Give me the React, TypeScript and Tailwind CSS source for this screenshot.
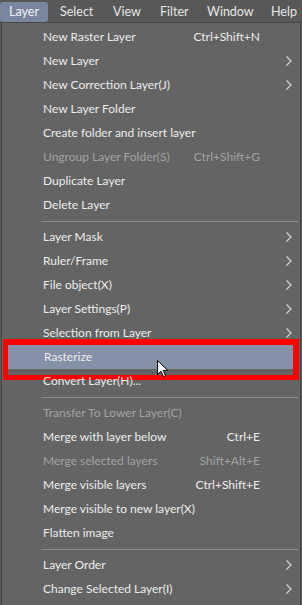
import React from 'react'

type Item = {
  label: string
  shortcut?: string
  sub?: boolean
  disabled?: boolean
  active?: boolean
}

const groups: Item[][] = [
  [
    { label: 'New Raster Layer', shortcut: 'Ctrl+Shift+N' },
    { label: 'New Layer', sub: true },
    { label: 'New Correction Layer(J)', sub: true },
    { label: 'New Layer Folder' },
    { label: 'Create folder and insert layer' },
    { label: 'Ungroup Layer Folder(S)', shortcut: 'Ctrl+Shift+G', disabled: true },
    { label: 'Duplicate Layer' },
    { label: 'Delete Layer' },
  ],
  [
    { label: 'Layer Mask', sub: true },
    { label: 'Ruler/Frame', sub: true },
    { label: 'File object(X)', sub: true },
    { label: 'Layer Settings(P)', sub: true },
    { label: 'Selection from Layer', sub: true },
    { label: 'Rasterize', active: true },
    { label: 'Convert Layer(H)...' },
  ],
  [
    { label: 'Transfer To Lower Layer(C)', disabled: true },
    { label: 'Merge with layer below', shortcut: 'Ctrl+E' },
    { label: 'Merge selected layers', shortcut: 'Shift+Alt+E', disabled: true },
    { label: 'Merge visible layers', shortcut: 'Ctrl+Shift+E' },
    { label: 'Merge visible to new layer(X)' },
    { label: 'Flatten image' },
  ],
  [
    { label: 'Layer Order', sub: true },
    { label: 'Change Selected Layer(I)', sub: true },
  ],
]

const menus = [
  { name: 'Layer', w: 'w-[48px] justify-center' },
  { name: 'Select', w: 'w-[55px] pl-[12px]' },
  { name: 'View', w: 'w-[47px] pl-[10px]' },
  { name: 'Filter', w: 'w-[47px] pl-[10px]' },
  { name: 'Window', w: 'w-[64px] pl-[10px]' },
  { name: 'Help', w: 'w-[41px] pl-[10px]' },
]

function Chevron() {
  return (
    <svg width="6" height="10" viewBox="0 0 6 10" className="block">
      <path d="M0.5 0.5 L5 5 L0.5 9.5" fill="none" stroke="#d8d8d8" strokeWidth="1.1" />
    </svg>
  )
}

function Cursor() {
  return (
    <svg width="12" height="18" viewBox="0 0 12 18" className="absolute left-[154px] top-[15px]">
      <path d="M0.5 0.5 L0.5 14.5 L4 11.2 L6.5 16.8 L8.6 15.9 L6.2 10.4 L10.8 10.4 Z" fill="#fff" stroke="#000" strokeWidth="1" />
    </svg>
  )
}

function Row({ item }: { item: Item }) {
  const color = item.disabled ? 'text-[#a2a2a2]' : 'text-[#ececec]'
  return (
    <div className={`relative flex h-[24px] items-center pl-[41px] ${item.active ? 'mx-[1px] bg-[#8590a9] pl-[40px]' : ''}`}>
      <span className={`flex-1 whitespace-nowrap ${color}`}>{item.label}</span>
      {item.shortcut && <span className={`whitespace-nowrap ${color}`}>{item.shortcut}</span>}
      <div className="flex w-[40px] items-center pl-[26px]">{item.sub && <Chevron />}</div>
      {item.active && (
        <>
          <div className="pointer-events-none absolute -top-[6px] -bottom-[11px] left-0 right-0 border-t-[6px] border-r-[6px] border-b-[5px] border-l-[5px] border-[#ff0000]" />
          <Cursor />
        </>
      )}
    </div>
  )
}

export default function App() {
  return (
    <div className="h-[605px] w-[302px] overflow-hidden bg-[#585858] text-[12px] font-['Lato',sans-serif]">
      <div className="flex h-[22px] items-start pt-[2px]">
        {menus.map((m, i) => (
          <div
            key={m.name}
            className={`flex h-[20px] shrink-0 items-center rounded-[3px] text-[12.5px] ${m.w} ${
              i === 0 ? 'bg-[#7a85a0] text-[#eef0f4]' : 'text-[#e6e6e6]'
            }`}
          >
            {m.name}
          </div>
        ))}
      </div>
      <div className="ml-[1px] w-[300px] border border-[#474747] bg-[#646464] pt-[2px] pb-[5px]">
        {groups.map((g, gi) => (
          <div key={gi}>
            {gi > 0 && (
              <div className="flex h-[8px] items-center pl-[39px] pr-[2px]">
                <div className="h-px flex-1 bg-[#8c8c8c]" />
              </div>
            )}
            {g.map((it) => (
              <Row key={it.label} item={it} />
            ))}
          </div>
        ))}
      </div>
    </div>
  )
}
